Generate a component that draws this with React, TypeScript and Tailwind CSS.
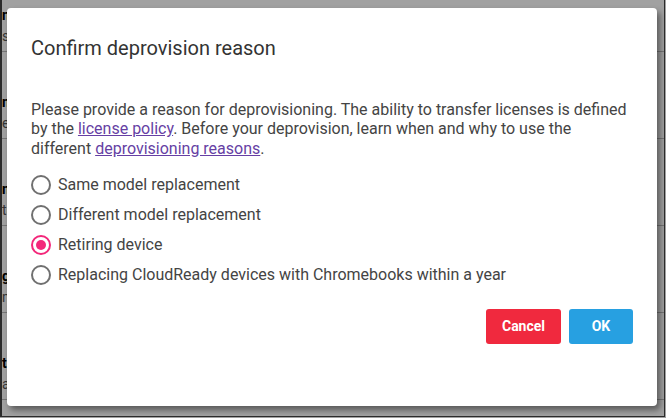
import React, { useState } from 'react';

const rows = [
  { title: 'nimbus-kiosk-014  iD', sub: 'serial 5CD94X21LM' },
  { title: 'nova-lab-cart-22', sub: 'enrolled' },
  { title: 'nexus-desk-07', sub: 'tablet' },
  { title: 'gamma-room-3', sub: 'model' },
  { title: 'tango-front-desk', sub: 'active' },
];

const reasons = [
  'Same model replacement',
  'Different model replacement',
  'Retiring device',
  'Replacing CloudReady devices with Chromebooks within a year',
];

const Radio = ({ checked }: { checked: boolean }) => (
  <span
    className={`flex h-[20px] w-[20px] shrink-0 items-center justify-center rounded-full border-2 ${
      checked ? 'border-[#f3277a]' : 'border-[#707070]'
    }`}
  >
    {checked && <span className="h-[10px] w-[10px] rounded-full bg-[#f3277a]" />}
  </span>
);

const App = () => {
  const [reason, setReason] = useState(2);

  return (
    <div
      className="h-[418px] w-[666px] bg-[#a1a1a1] pb-px pr-px"
      style={{ fontFamily: 'Roboto, "Liberation Sans", sans-serif' }}
    >
      <div className="relative h-full overflow-hidden border-b border-l-2 border-r border-[#2b2b2b] bg-white">
        {/* page behind the dialog */}
        <div className="-mt-[35px]">
          {rows.map((r) => (
            <div key={r.title} className="h-[87px] border-b border-[#bcbcbc] pt-[41px]">
              <div className="whitespace-nowrap text-[14px] font-bold leading-[18px] text-black">{r.title}</div>
              <div className="mt-[2px] whitespace-nowrap text-[14px] leading-[20px] text-[#555]">{r.sub}</div>
            </div>
          ))}
        </div>

        {/* scrim + dialog */}
        <div className="absolute inset-0 bg-black/[0.37]">
          <div className="absolute left-[5px] top-[8px] h-[398px] w-[650px] rounded-[4px] bg-white px-6 pt-[28px] shadow-[3px_4px_6px_rgba(0,0,0,0.45)]">
            <h2 className="text-[20px] leading-[24px] text-[#333]">Confirm deprovision reason</h2>

            <p className="mt-[40px] text-[16px] leading-[19.3px] text-[#444]">
              Please provide a reason for deprovisioning. The ability to transfer licenses is defined by the{' '}
              <a href="#" className="text-[#663fa4] underline">
                license policy
              </a>
              . Before your deprovision, learn when and why to use the different{' '}
              <a href="#" className="text-[#663fa4] underline">
                deprovisioning reasons
              </a>
              .
            </p>

            <div className="mt-[12px] flex flex-col">
              {reasons.map((label, i) => (
                <label
                  key={label}
                  onClick={() => setReason(i)}
                  className="flex h-[30px] cursor-pointer items-center gap-[7px] text-[16px] text-[#444]"
                >
                  <Radio checked={reason === i} />
                  {label}
                </label>
              ))}
            </div>

            <div className="mt-[19px] flex justify-end gap-2">
              <button className="h-[35px] w-[75px] rounded-[3px] bg-[#f0293e] text-[14px] font-bold text-white">
                Cancel
              </button>
              <button className="h-[35px] w-[64px] rounded-[3px] bg-[#27a0e1] text-[14px] font-bold text-white">
                OK
              </button>
            </div>
          </div>
        </div>
      </div>
    </div>
  );
};

export default App;
